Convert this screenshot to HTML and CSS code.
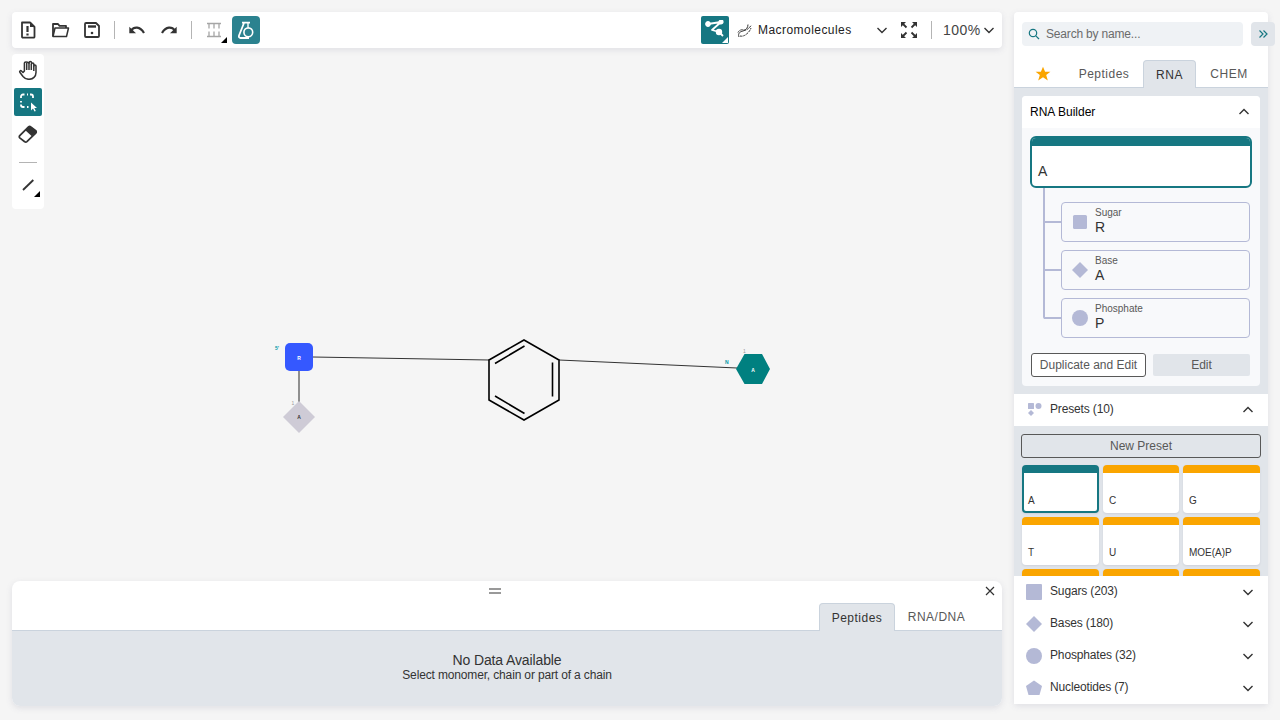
FILE: index.html
```html
<!DOCTYPE html>
<html lang="en">
<head>
<meta charset="utf-8">
<title>Ketcher Macromolecules</title>
<link rel="stylesheet" href="styles.css">
</head>
<body>
<svg class="canvas" width="1280" height="720" viewBox="0 0 1280 720">
  <line x1="313" y1="357" x2="489" y2="360" class="bond"/>
  <line x1="559" y1="360" x2="737" y2="368" class="bond"/>
  <line x1="299" y1="371" x2="299" y2="403" class="bond-side"/>
  <rect x="285" y="343" width="28" height="28" rx="5" class="sugar"/>
  <text x="299" y="359.500" class="mono-label light">R</text>
  <polygon points="299,401 315,417 299,433 283,417" class="base"/>
  <text x="299" y="419" class="mono-label dark">A</text>
  <polygon points="736,369 744.500,354 762,354 770,369 762,384 744.500,384" class="amino"/>
  <text x="753" y="371.500" class="mono-label light">A</text>
  <text x="275" y="350" class="ap-label teal">5'</text>
  <text x="291.500" y="405" class="ap-label grey">1</text>
  <text x="725" y="364" class="ap-label teal">N</text>
  <text x="743" y="352.500" class="ap-label grey">1</text>
  <polygon points="524,340 559,360 559,400 524,420 489,400 489,360" class="ring"/>
  <path d="M495 363.500 524.500 346M552.500 362.500V396.500M495 396 524.500 413.500" class="ring"/>
</svg>

<main class="app">
  <section class="workspace">
    <header class="toolbar">
      <div class="tool-group">
        <button class="tool"><svg width="20" height="20" viewBox="0 0 20 20" class="ico thick"><path d="M4 2.500h8l4.500 4.500v9.800a.8.800 0 0 1-.8.800H4.800a.8.800 0 0 1-.8-.8z"/><path d="M12 2.500h1l3.500 3.500v1H12z" class="ico-fill"/><path d="M9.500 6v6M9.500 13.500v2" stroke-width="2.200"/></svg></button>
        <button class="tool"><svg width="20" height="20" viewBox="0 0 20 20" class="ico thick"><path d="M3 16.500V4h5l1.500 1.800H16V8"/><path d="M3 16.500 5 8h13.500l-2 8.500z" stroke-width="1.500"/></svg></button>
        <button class="tool"><svg width="20" height="20" viewBox="0 0 20 20" class="ico thick"><path d="M3 4a1 1 0 0 1 1-1h10l3 3v10a1 1 0 0 1-1 1H4a1 1 0 0 1-1-1z"/><path d="M6 6.500h8" stroke-width="2.400"/><circle cx="10" cy="13" r="1.300" class="ico-fill"/></svg></button>
        <span class="vsep"></span>
        <button class="tool"><svg width="20" height="20" viewBox="0 0 20 20" class="ico bold"><path d="M2.300 6.700v6.600H9z" class="ico-fill"/><path d="M4 10.500C7 6.500 13 6 17 13"/></svg></button>
        <button class="tool"><svg width="20" height="20" viewBox="0 0 20 20" class="ico bold"><path d="M17.700 6.700v6.600H11z" class="ico-fill"/><path d="M16 10.500C13 6.500 7 6 3 13"/></svg></button>
        <span class="vsep"></span>
        <button class="tool corner"><svg width="20" height="20" viewBox="0 0 20 20" class="ico muted"><path d="M3 3.500h14M5 3.500v5M10 3.500v5M15 3.500v5M3 16.500h14M5 11.500v5M10 11.500v5M15 11.500v5"/></svg></button>
        <button class="tool soft-active"><svg width="20" height="20" viewBox="0 0 20 20" class="ico light thick"><path d="M6 2.700h8M8 3 3 15.500C2.500 17 3.300 18 4.500 18H13"/><path d="M12 3v4.500" stroke-width="1.400"/><circle cx="12.300" cy="12.300" r="4.400" stroke-width="1.600"/></svg></button>
      </div>
      <div class="tool-group right-group">
        <button class="tool active corner-light"><svg width="20" height="20" viewBox="0 0 20 20" class="ico light thick"><path d="M3 4 16 2 7 10 14 12 18 16"/><circle cx="3" cy="4" r="2" class="light-fill"/><circle cx="16" cy="2" r="1.700" class="light-fill"/><circle cx="14" cy="12" r="2.300" class="light-fill"/></svg></button>
        <svg class="dna ico" width="16" height="16" viewBox="0 0 16 16"><path d="M2 15C.5 11 3.500 9.500 6 9c3-.6 5-3.500 5-6.500" stroke-width="1"/><path d="M1 10.500C2.500 7.500 5 7.500 7 8c2.500.6 5-1.500 7.500-5" stroke-width="1" stroke-dasharray="2.500 .8"/><path d="M3 14c2 .5 4 0 6-1.500s4-3.500 5-6.500" stroke-width="1" stroke-dasharray="2.500 .8"/></svg>
        <div class="mode-select"><span class="mode-name">Macromolecules</span><svg class="chev" width="12" height="12" viewBox="0 0 12 12"><path d="M1.500 4 6 8.500 10.500 4"/></svg></div>
        <button class="tool"><svg width="20" height="20" viewBox="0 0 20 20" class="ico thick"><path d="M2 2h5L2 7zM18 2h-5l5 5zM2 18h5l-5-5zM18 18h-5l5-5z" class="ico-fill"/><path d="M3 3l4.500 4.500M17 3l-4.500 4.500M3 17l4.500-4.500M17 17l-4.500-4.500"/></svg></button>
        <span class="vsep tight"></span>
        <div class="zoom-select"><span>100%</span><svg class="chev" width="12" height="12" viewBox="0 0 12 12"><path d="M1.500 4 6 8.500 10.500 4"/></svg></div>
      </div>
    </header>

    <nav class="sidebar">
      <button class="tool"><svg width="20" height="20" viewBox="0 0 20 20" class="ico thick"><path d="M5 12.500 3.500 11c-1-.9-2.400.3-1.500 1.500l3 4c1.500 1.800 3 2.800 6 2.800 4 0 7-2.800 7-6.800V6c0-1.400-2.200-1.400-2.200 0V4c0-1.400-2.300-1.400-2.300 0V2.500c0-1.400-2.300-1.400-2.300 0V3C8.700 1.600 6.400 1.600 6.400 3V11z" stroke-width="1.500"/><path d="M8.700 3v7M11 2.500V10M13.300 4v6M15.800 6v5" stroke-width="1.500"/></svg></button>
      <button class="tool active"><svg width="20" height="20" viewBox="0 0 20 20" class="ico light"><path d="M3 6V4.500a2 2 0 0 1 2-2H6.500M9 2.500h1M12 2.500h1a2 2 0 0 1 2 2V6M3 9v1.500M3 12.500V13a2 2 0 0 0 2 2h1.500M9 15h1.500" stroke-width="1.800"/><path d="M15 8.500h0" stroke-width="1.800"/><path d="M13 10.500v8l2-2 1.500 3 1.300-.6-1.500-2.900h2.700z" class="light-fill" stroke="none"/></svg></button>
      <button class="tool"><svg width="22" height="22" viewBox="0 0 20 20" class="ico"><path d="M2.500 11.500 10.500 3.500a1.500 1.500 0 0 1 2 0l4.500 3.500a1.500 1.500 0 0 1 0 2.200L9 17a1.500 1.500 0 0 1-2 0l-4.500-3.500a1.400 1.400 0 0 1 0-2z" stroke-width="1.600"/><path d="M7.500 6.500 10.800 3.300a1.500 1.500 0 0 1 2 0l4.200 3.700a1.500 1.500 0 0 1 0 2.200L13.500 12z" class="ico-fill"/></svg></button>
      <span class="hsep"></span>
      <button class="tool corner raised"><svg width="20" height="20" viewBox="0 0 20 20" class="ico thick"><path d="M5 14 15.300 4"/></svg></button>
    </nav>

    <section class="details">
      <div class="details-head">
        <span class="handle"></span>
        <svg class="close" width="10" height="10" viewBox="0 0 10 10"><path d="M1 1 9 9M9 1 1 9"/></svg>
      </div>
      <div class="details-tabs">
        <span class="tab selected wide">Peptides</span>
        <span class="tab wide">RNA/DNA</span>
      </div>
      <div class="details-body">
        <p class="empty-title">No Data Available</p>
        <p class="empty-sub">Select monomer, chain or part of a chain</p>
      </div>
    </section>
  </section>

  <aside class="library">
    <div class="search-row">
      <div class="search">
        <svg width="12" height="12" viewBox="0 0 12 12" class="search-ico"><circle cx="5" cy="5" r="3.700"/><path d="M7.800 7.800 11 11"/></svg>
        <span>Search by name...</span>
      </div>
      <button class="collapse"><svg width="10" height="10" viewBox="0 0 10 10"><path d="M1.500 1.500 5 5 1.500 8.500M5.500 1.500 9 5 5.500 8.500"/></svg></button>
    </div>

    <div class="lib-tabs">
      <span class="tab star-tab"><svg width="16" height="16" viewBox="0 0 16 16"><path class="star" d="M8 .8l2.100 5h5.300l-4.200 3.300 1.600 5.300L8 11.300l-4.800 3.100 1.600-5.300L.6 5.800h5.300z"/></svg></span>
      <span class="tab peptides-tab">Peptides</span>
      <span class="tab selected rna-tab">RNA</span>
      <span class="tab chem-tab">CHEM</span>
    </div>

    <div class="lib-content">
      <div class="builder">
        <div class="builder-head"><span>RNA Builder</span><svg class="chev" width="12" height="12" viewBox="0 0 12 12"><path d="M1.500 8 6 3.500 10.500 8"/></svg></div>
        <div class="builder-body">
          <div class="current"><div class="current-bar"></div><span class="current-name">A</span></div>
          <div class="tree">
            <div class="part">
              <svg class="part-ico" width="16" height="16" viewBox="0 0 16 16"><rect x="1" y="1" width="14" height="14" rx="1.500"/></svg>
              <div class="part-text"><span class="part-kind">Sugar</span><span class="part-name">R</span></div>
            </div>
            <div class="part">
              <svg class="part-ico" width="16" height="16" viewBox="0 0 16 16"><path d="M8 0 16 8 8 16 0 8z"/></svg>
              <div class="part-text"><span class="part-kind">Base</span><span class="part-name">A</span></div>
            </div>
            <div class="part">
              <svg class="part-ico" width="16" height="16" viewBox="0 0 16 16"><circle cx="8" cy="8" r="8"/></svg>
              <div class="part-text"><span class="part-kind">Phosphate</span><span class="part-name">P</span></div>
            </div>
          </div>
          <div class="builder-actions">
            <button class="btn-outline">Duplicate and Edit</button>
            <button class="btn-flat">Edit</button>
          </div>
        </div>
      </div>

      <div class="acc-row presets-row">
        <svg class="acc-ico" width="14" height="14" viewBox="0 0 14 14"><rect x="0" y="0" width="6" height="6" rx=".6"/><circle cx="10.500" cy="3" r="3"/><path d="M3 7 6 10 3 13 0 10z"/></svg>
        <span class="acc-label">Presets (10)</span>
        <svg class="chev" width="12" height="12" viewBox="0 0 12 12"><path d="M1.500 8 6 3.500 10.500 8"/></svg>
      </div>
      <div class="presets">
        <button class="btn-new">New Preset</button>
        <div class="preset-grid">
          <div class="preset current-preset"><span>A</span></div>
          <div class="preset"><span>C</span></div>
          <div class="preset"><span>G</span></div>
          <div class="preset"><span>T</span></div>
          <div class="preset"><span>U</span></div>
          <div class="preset"><span>MOE(A)P</span></div>
          <div class="preset"></div>
          <div class="preset"></div>
          <div class="preset"></div>
        </div>
      </div>

      <div class="acc-row">
        <svg class="acc-ico big" width="16" height="16" viewBox="0 0 16 16"><rect width="16" height="16" rx="1"/></svg>
        <span class="acc-label">Sugars (203)</span>
        <svg class="chev" width="12" height="12" viewBox="0 0 12 12"><path d="M1.500 4 6 8.500 10.500 4"/></svg>
      </div>
      <div class="acc-row">
        <svg class="acc-ico big" width="16" height="16" viewBox="0 0 16 16"><path d="M8 0 16 8 8 16 0 8z"/></svg>
        <span class="acc-label">Bases (180)</span>
        <svg class="chev" width="12" height="12" viewBox="0 0 12 12"><path d="M1.500 4 6 8.500 10.500 4"/></svg>
      </div>
      <div class="acc-row">
        <svg class="acc-ico big" width="16" height="16" viewBox="0 0 16 16"><circle cx="8" cy="8" r="8"/></svg>
        <span class="acc-label">Phosphates (32)</span>
        <svg class="chev" width="12" height="12" viewBox="0 0 12 12"><path d="M1.500 4 6 8.500 10.500 4"/></svg>
      </div>
      <div class="acc-row">
        <svg class="acc-ico big" width="16" height="16" viewBox="0 0 16 16"><path d="M8 .5 16 6 13.500 15H2.500L0 6z"/></svg>
        <span class="acc-label">Nucleotides (7)</span>
        <svg class="chev" width="12" height="12" viewBox="0 0 12 12"><path d="M1.500 4 6 8.500 10.500 4"/></svg>
      </div>
    </div>
  </aside>
</main>
</body>
</html>
```

FILE: styles.css
```css
* { box-sizing: border-box; }
html, body { margin: 0; height: 100%; overflow: hidden; }
body { background: #f5f5f5; font-family: "Liberation Sans", Arial, sans-serif; color: #333; position: relative; }
button { font-family: inherit; padding: 0; border: 0; background: none; }
p { margin: 0; }

.canvas { position: absolute; left: 0; top: 0; }
.bond { stroke: #333; stroke-width: 1; }
.bond-side { stroke: #8f8f8f; stroke-width: 2; }
.sugar { fill: #3558ff; }
.base { fill: #cecbd6; }
.amino { fill: #008080; }
.ring { fill: none; stroke: #000; stroke-width: 1.600; }
.mono-label { font-size: 5px; font-weight: 700; text-anchor: middle; }
.mono-label.light { fill: #fff; }
.mono-label.dark { fill: #333; }
.ap-label { font-size: 5px; font-weight: 700; }
.ap-label.teal { fill: #0097a7; }
.ap-label.grey { fill: #9a9a9a; font-weight: 400; }

.app { position: relative; display: grid; grid-template-columns: 990px 254px; column-gap: 12px; padding: 12px; height: 720px; }
.workspace { display: flex; flex-direction: column; align-items: flex-start; height: 694px; }

.toolbar { width: 100%; height: 36px; display: flex; justify-content: space-between; align-items: center; padding: 0 2px; background: #fff; border-radius: 4px; box-shadow: 0 2px 6px rgba(103, 104, 132, .15); }
.tool-group { display: flex; align-items: center; gap: 4px; }
.right-group { margin-right: 2px; }
.tool { position: relative; width: 28px; height: 28px; display: flex; align-items: center; justify-content: center; border-radius: 2px; }
.active { background: #167782; }
.soft-active { background: #2b828f; border-radius: 4px; }
.vsep { width: 1px; height: 18px; background: #b4b4b4; margin: 0 4px; }
.vsep.tight { margin: 0 7px 0 4px; }
.corner::after { content: ""; position: absolute; right: 1px; bottom: 1px; border-style: solid; border-width: 0 0 6px 6px; border-color: transparent transparent #000 transparent; }
.corner.raised::after { right: 2px; bottom: 3px; }
.corner-light::after { content: ""; position: absolute; right: 1px; bottom: 1px; border-style: solid; border-width: 0 0 6px 6px; border-color: transparent transparent #fff transparent; }

.ico { fill: none; stroke: #333; stroke-width: 1.400; stroke-linejoin: round; }
.ico.thick { stroke-width: 1.800; }
.ico.bold { stroke-width: 2.200; }
.ico.muted { stroke: #a6a6a6; stroke-width: 1.300; }
.ico.light { stroke: #fff; }
.ico-fill { fill: #333; stroke: none; }
.light-fill { fill: #fff; }
.dna { margin: 0 0 0 4px; }
.mode-select { width: 134px; display: flex; align-items: center; justify-content: space-between; padding: 0 4px 0 0; margin-left: 1px; margin-right: -1px; font-size: 12px; letter-spacing: .45px; color: #333; }
.mode-name { color: #222; }
.zoom-select { display: flex; align-items: center; gap: 2px; width: 55px; font-size: 14px; letter-spacing: .5px; color: #444; }
.chev { fill: none; stroke: #333; stroke-width: 1.400; flex: none; }

.sidebar { width: 32px; height: 155px; margin-top: 6px; padding: 2px; display: flex; flex-direction: column; gap: 4px; background: #fff; border-radius: 4px; position: relative; }
.hsep { width: 18px; height: 1px; background: #b4b4b4; margin: 10px 5px 5px; flex: none; }

.details { width: 990px; height: 125px; margin-top: auto; border-radius: 8px; overflow: hidden; background: #fff; box-shadow: 0 2px 6px rgba(103, 104, 132, .15); position: relative; }
.details-head { height: 22px; position: relative; }
.handle { position: absolute; left: 477px; top: 7px; width: 12px; height: 6px; border-top: 2px solid #999; border-bottom: 2px solid #999; }
.close { position: absolute; right: 7px; top: 5px; fill: none; stroke: #333; stroke-width: 1.200; }
.details-tabs { height: 28px; display: flex; justify-content: flex-end; padding-right: 24px; border-bottom: 1px solid #cad3dd; }
.tab { height: 28px; display: flex; align-items: center; justify-content: center; font-size: 12px; letter-spacing: .5px; color: #585858; }
.tab.selected { background: #e1e5ea; border: 1px solid #cad3dd; border-bottom: 0; border-radius: 4px 4px 0 0; color: #333; }
.tab.wide { width: 76px; }
.details-tabs .tab:last-child { width: 83px; }
.details-body { height: 75px; background: #e1e5ea; text-align: center; padding-top: 21px; }
.empty-title { font-size: 14px; line-height: 16px; letter-spacing: -.12px; color: #333; }
.empty-sub { font-size: 12px; line-height: 14px; letter-spacing: -.15px; color: #333; }

.library { width: 254px; height: 692px; background: #fff; border-radius: 4px; position: relative; display: flex; flex-direction: column; box-shadow: 0 2px 6px rgba(103, 104, 132, .15); }
.search-row { display: flex; gap: 8px; padding: 10px 0 0 8px; height: 34px; flex: none; }
.search { width: 221px; height: 24px; flex: none; background: #eff2f5; border-radius: 4px; display: flex; align-items: center; gap: 6px; padding-left: 6px; font-size: 12px; letter-spacing: -.18px; color: #6b6b6b; }
.search-ico { fill: none; stroke: #167782; stroke-width: 1.200; }
.collapse { width: 24px; height: 24px; background: #e1e5ea; border-radius: 4px; flex: none; display: flex; align-items: center; justify-content: center; }
.collapse svg { fill: none; stroke: #167782; stroke-width: 1.200; }
.lib-tabs { height: 42px; flex: none; padding: 14px 0 0 12px; display: flex; border-bottom: 1px solid #cad3dd; }
.star-tab { width: 34px; }
.star { fill: #faa500; }
.peptides-tab { width: 83px; padding-left: 5px; }
.rna-tab { width: 53px; }
.chem-tab { width: 66px; }
.lib-content { flex: 1; background: #e1e5ea; display: flex; flex-direction: column; overflow: hidden; min-height: 0; }

.builder { margin: 8px; height: 290px; flex: none; background: #f8f9fb; border-radius: 4px; overflow: hidden; }
.builder-head { height: 32px; background: #fff; display: flex; justify-content: space-between; align-items: center; padding: 0 10px 0 8px; font-size: 12px; color: #000; }
.builder-body { padding: 8px; }
.current { width: 222px; height: 52px; background: #fff; border: 2px solid #167782; border-radius: 6px; overflow: hidden; }
.current-bar { height: 8px; background: #167782; }
.current-name { display: block; padding: 17px 0 0 6px; font-size: 14px; line-height: 16px; color: #333; }
.tree { margin: 0 0 0 13px; height: 166px; padding: 14px 0 0 18px; display: flex; flex-direction: column; gap: 8px; position: relative; }
.tree::before { content: ""; position: absolute; left: 0; top: 0; width: 2px; height: 131px; background: #b4b9d6; border-radius: 0 0 0 2px; }
.part { position: relative; width: 189px; height: 40px; border: 1px solid #b4b9d6; border-radius: 4px; display: flex; align-items: center; padding-left: 10px; gap: 7px; }
.part::before { content: ""; position: absolute; left: -18px; top: 18px; width: 17px; height: 2px; background: #b4b9d6; }
.part-ico { fill: #b4b9d6; flex: none; }
.part-text { display: flex; flex-direction: column; margin-top: -2px; }
.part-kind { font-size: 10px; line-height: 11px; color: #585858; }
.part-name { font-size: 14px; line-height: 15px; margin-top: 2px; color: #333; }
.builder-actions { display: flex; align-items: center; gap: 7px; margin-left: 1px; margin-top: -1px; }
.btn-outline { width: 115px; height: 24px; background: #fff; border: 1px solid #585858; border-radius: 3px; font-size: 12px; color: #585858; }
.btn-flat { width: 97px; height: 22px; background: #e1e5ea; border-radius: 2px; font-size: 12px; color: #585858; }

.acc-row { height: 32px; flex: none; background: #fff; display: flex; align-items: center; padding: 0 14px 0 12px; font-size: 12px; letter-spacing: -.15px; color: #333; }
.acc-ico { fill: #b4b9d6; flex: none; margin: 0 8px 0 2px; }
.acc-ico.big { margin: 0 8px 0 0; }
.acc-label { flex: 1; margin-top: -2px; }
.presets { height: 150px; flex: none; padding: 8px 7px 0; overflow: hidden; }
.btn-new { display: block; width: 240px; height: 24px; border: 1px solid #585858; border-radius: 3px; font-size: 12px; color: #585858; }
.preset-grid { display: grid; grid-template-columns: 77px 76px 77px; grid-auto-rows: 48px; gap: 4px; margin: 7px 0 0 1px; }
.preset { background: #fff; border-top: 8px solid #faa500; border-radius: 4px; display: flex; align-items: flex-end; padding: 0 0 6px 6px; font-size: 10px; line-height: 12px; color: #333; box-shadow: 0 1px 2px rgba(103, 104, 132, .15); }
.current-preset { border: 2px solid #167782; border-top: 8px solid #167782; padding: 0 0 4px 4px; }
```
